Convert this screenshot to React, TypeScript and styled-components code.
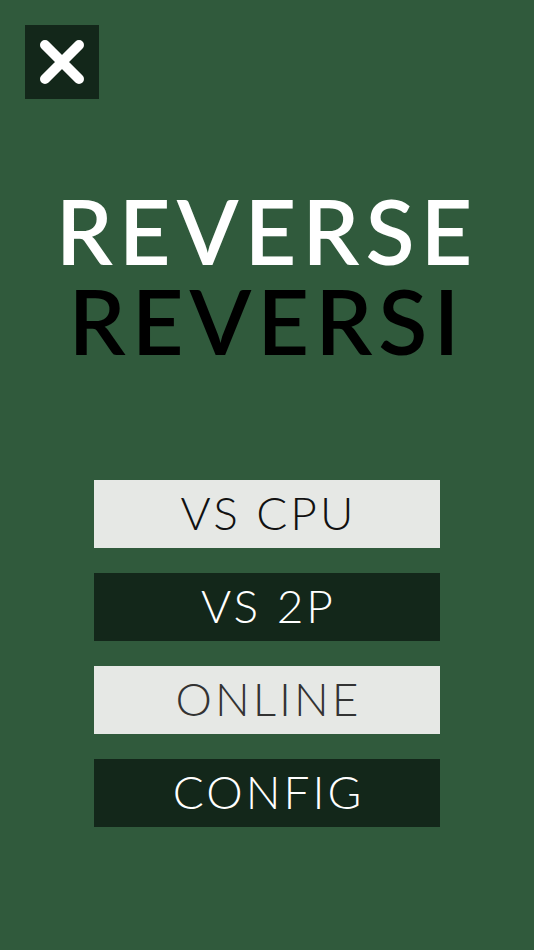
import React from "react";
import styled, { createGlobalStyle } from "styled-components";

const Global = createGlobalStyle`
  html, body { margin: 0; padding: 0; background: #305a3c; }
  #root { min-height: 100vh; }
`;

const Screen = styled.div`
  width: 534px;
  height: 950px;
  background: #305a3c;
  display: flex;
  flex-direction: column;
  font-family: "Lato", "Open Sans", sans-serif;
  overflow: hidden;
`;

const TopBar = styled.div`
  display: flex;
  padding: 25px 0 0 25px;
`;

const CloseButton = styled.button`
  width: 74px;
  height: 74px;
  border: none;
  padding: 0;
  background: #13271a;
  display: flex;
  align-items: center;
  justify-content: center;
  cursor: pointer;
`;

const Title = styled.h1`
  margin: 86px 0 0 0;
  display: flex;
  flex-direction: column;
  align-items: center;
  font-weight: 600;
  font-size: 90px;
  line-height: 90px;
  letter-spacing: 6px;
`;

const TitleLine = styled.span<{ $color: string }>`
  color: ${(p) => p.$color};
  display: block;
`;

const Menu = styled.nav`
  margin: 115px auto 0;
  width: 346px;
  display: flex;
  flex-direction: column;
  gap: 25px;
`;

const MenuButton = styled.button<{ $light: boolean; $text?: string }>`
  height: 68px;
  border: none;
  padding: 0 0 3px 3px;
  box-sizing: border-box;
  background: ${(p) => (p.$light ? "#e6e8e5" : "#13271a")};
  color: ${(p) => p.$text ?? (p.$light ? "#111111" : "#ffffff")};
  font-family: "Lato", "Open Sans", sans-serif;
  font-weight: 300;
  font-size: 46px;
  letter-spacing: 3px;
  display: flex;
  align-items: center;
  justify-content: center;
  cursor: pointer;
`;

const items = [
  { label: "VS CPU", light: true },
  { label: "VS 2P", light: false },
  { label: "ONLINE", light: true, text: "#333333" },
  { label: "CONFIG", light: false },
];

export default function App() {
  return (
    <>
      <Global />
      <Screen>
        <TopBar>
          <CloseButton aria-label="close">
            <svg width="48" height="48" viewBox="0 0 48 48">
              <path
                d="M7 7 L41 41 M41 7 L7 41"
                stroke="#ffffff"
                strokeWidth="10"
                strokeLinecap="round"
              />
            </svg>
          </CloseButton>
        </TopBar>
        <Title>
          <TitleLine $color="#ffffff">REVERSE</TitleLine>
          <TitleLine $color="#000000">REVERSI</TitleLine>
        </Title>
        <Menu>
          {items.map((it) => (
            <MenuButton key={it.label} $light={it.light} $text={it.text}>
              {it.label}
            </MenuButton>
          ))}
        </Menu>
      </Screen>
    </>
  );
}
